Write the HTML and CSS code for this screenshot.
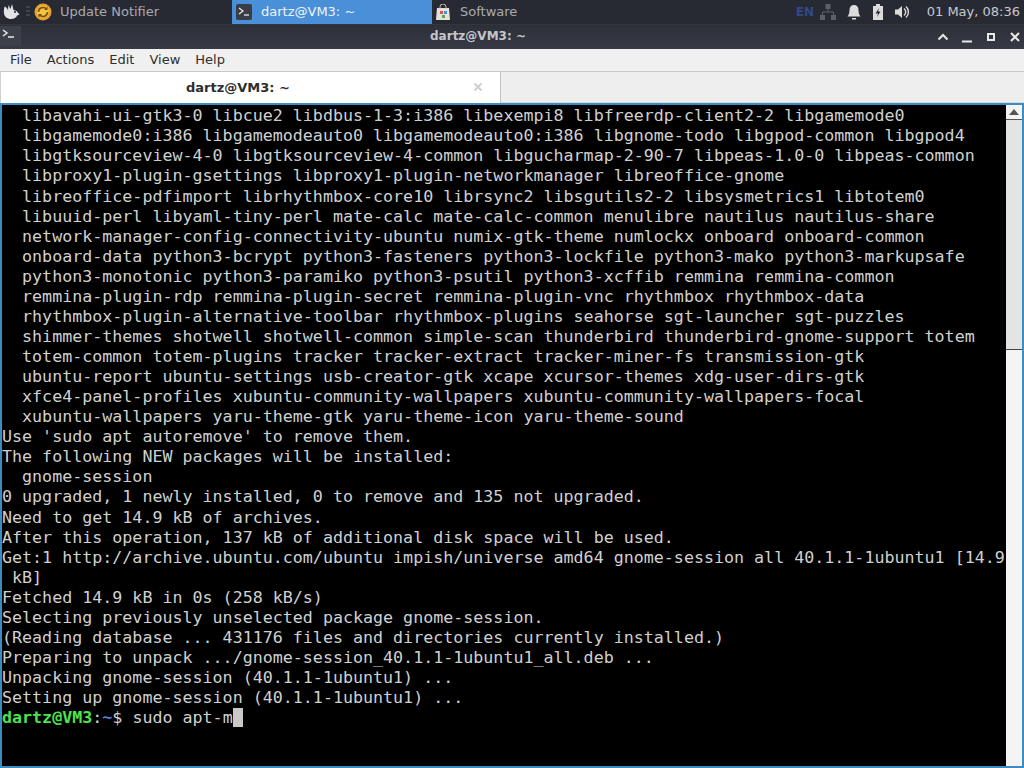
FILE: index.html
```html
<!DOCTYPE html>
<html lang="en">
<head>
<meta charset="utf-8">
<title>dartz@VM3: ~</title>
<link rel="stylesheet" href="styles.css">
</head>
<body>
<div class="panel">
  <svg class="whisker" width="24" height="24" viewBox="0 0 24 24"><path d="M4 6.500c1.500 0 3 1.500 4 3.500l.5-5 2 4 1.500-5 1.500 6 3 1 3 3.500-2.500 1c-.5 2-3 3.500-6 3.500-4 0-6.500-2.500-7-5.500-.3-2 0-5 .500-7z" fill="#e4e4e8"/><circle cx="15" cy="12" r="1" fill="#282a33"/></svg>
  <svg class="handle" width="6" height="24" viewBox="0 0 6 24"><path d="M1 7h4M1 11h4M1 15h4" stroke="#5c5e66" stroke-width="1"/></svg>
  <div class="task task-update">
    <svg width="18" height="18" viewBox="0 0 18 18"><circle cx="9" cy="9" r="8.500" fill="#e9a32c"/><circle cx="9" cy="9" r="6" fill="#f4c542"/><path d="M4.500 9a4.500 4.500 0 0 1 8-2.800M13.500 9a4.500 4.500 0 0 1-8 2.800" fill="none" stroke="#7a4a10" stroke-width="1.600"/><path d="M13.500 3.500v3.500h-3.500zM4.500 14.500v-3.500h3.500z" fill="#7a4a10"/></svg>
    <span>Update Notifier</span>
  </div>
  <div class="task task-active">
    <svg width="16" height="16" viewBox="0 0 16 16"><rect width="16" height="16" rx="2" fill="#3a3d45"/><path d="M3 4l4 3-4 3" fill="none" stroke="#e8e8e8" stroke-width="1.300"/><path d="M8 11h5" stroke="#e8e8e8" stroke-width="1.300"/></svg>
    <span>dartz@VM3: ~</span>
  </div>
  <div class="task task-software">
    <svg width="14" height="16" viewBox="0 0 14 16"><path d="M1 4h12l1 12H0z" fill="#e6e2da"/><path d="M4 5V3a3 3 0 0 1 6 0v2" fill="none" stroke="#c9b9a0" stroke-width="1"/><rect x="4" y="7" width="3" height="3" fill="#d9534f"/><rect x="8" y="7" width="3" height="3" fill="#4a90d9"/><rect x="6" y="11" width="3" height="3" fill="#5aa65a"/></svg>
    <span>Software</span>
  </div>
  <div class="tray">
    <span class="lang">EN</span>
    <svg width="16" height="16" viewBox="0 0 16 16" fill="#5e6068"><rect x="5.500" y="0" width="5" height="5"/><rect x="0" y="11" width="5" height="5"/><rect x="11" y="11" width="5" height="5"/><path d="M8 5v3M2.500 11V8h11v3" fill="none" stroke="#5e6068"/></svg>
    <svg width="16" height="16" viewBox="0 0 16 16" fill="#dcdcdc"><path d="M8 1c3 0 4.500 2 4.500 5 0 3 .7 5 2 6.500h-13c1.300-1.500 2-3.500 2-6.500 0-3 1.500-5 4.500-5z"/><rect x="6" y="14" width="4" height="1.500"/></svg>
    <svg width="12" height="16" viewBox="0 0 12 16"><path d="M4 0h4v2h3v14H1V2h3z" fill="#dcdcdc"/><path d="M7 4L3.500 9.500H6L5 13l3.500-5.500H6z" fill="#282a33"/></svg>
    <svg width="16" height="16" viewBox="0 0 16 16" fill="#dcdcdc"><path d="M1 5.500h3L8 2v12l-4-3.500H1z"/><path d="M10 4.500a4.500 4.500 0 0 1 0 7M12 2.500a7.500 7.500 0 0 1 0 11" fill="none" stroke="#dcdcdc" stroke-width="1.400"/></svg>
    <span class="clock">01 May, 08:36</span>
  </div>
</div>

<div class="titlebar">
  <div class="win-icon"><svg width="20" height="20" viewBox="0 0 20 20"><path d="M3 4l4 3-4 3" fill="none" stroke="#e8e8e8" stroke-width="1.500"/><path d="M8 11h6" stroke="#e8e8e8" stroke-width="1.500"/></svg></div>
  <div class="win-title">dartz@VM3: ~</div>
  <div class="win-buttons">
    <svg width="12" height="12" viewBox="0 0 12 12"><path d="M1.500 8.500L6 4l4.500 4.500" fill="none" stroke="#e8e8e8" stroke-width="2"/></svg>
    <svg width="12" height="12" viewBox="0 0 12 12"><path d="M1 10.500h10" stroke="#e8e8e8" stroke-width="2"/></svg>
    <svg width="12" height="12" viewBox="0 0 12 12"><rect x="3" y="3" width="6" height="6" fill="none" stroke="#e8e8e8" stroke-width="2"/></svg>
    <svg width="12" height="12" viewBox="0 0 12 12"><path d="M2 2l8 8M10 2l-8 8" stroke="#e8e8e8" stroke-width="2"/></svg>
  </div>
</div>

<nav class="menubar">
  <span>File</span><span>Actions</span><span>Edit</span><span>View</span><span>Help</span>
</nav>

<div class="tabbar">
  <div class="tab">
    <span class="tab-label">dartz@VM3: ~</span>
    <svg class="tab-close" width="10" height="10" viewBox="0 0 10 10"><path d="M1.500 1.500l7 7M8.500 1.500l-7 7" stroke="#cfcfcf" stroke-width="2"/></svg>
  </div>
</div>

<div class="term-frame">
<pre class="term">  libavahi-ui-gtk3-0 libcue2 libdbus-1-3:i386 libexempi8 libfreerdp-client2-2 libgamemode0
  libgamemode0:i386 libgamemodeauto0 libgamemodeauto0:i386 libgnome-todo libgpod-common libgpod4
  libgtksourceview-4-0 libgtksourceview-4-common libgucharmap-2-90-7 libpeas-1.0-0 libpeas-common
  libproxy1-plugin-gsettings libproxy1-plugin-networkmanager libreoffice-gnome
  libreoffice-pdfimport librhythmbox-core10 librsync2 libsgutils2-2 libsysmetrics1 libtotem0
  libuuid-perl libyaml-tiny-perl mate-calc mate-calc-common menulibre nautilus nautilus-share
  network-manager-config-connectivity-ubuntu numix-gtk-theme numlockx onboard onboard-common
  onboard-data python3-bcrypt python3-fasteners python3-lockfile python3-mako python3-markupsafe
  python3-monotonic python3-paramiko python3-psutil python3-xcffib remmina remmina-common
  remmina-plugin-rdp remmina-plugin-secret remmina-plugin-vnc rhythmbox rhythmbox-data
  rhythmbox-plugin-alternative-toolbar rhythmbox-plugins seahorse sgt-launcher sgt-puzzles
  shimmer-themes shotwell shotwell-common simple-scan thunderbird thunderbird-gnome-support totem
  totem-common totem-plugins tracker tracker-extract tracker-miner-fs transmission-gtk
  ubuntu-report ubuntu-settings usb-creator-gtk xcape xcursor-themes xdg-user-dirs-gtk
  xfce4-panel-profiles xubuntu-community-wallpapers xubuntu-community-wallpapers-focal
  xubuntu-wallpapers yaru-theme-gtk yaru-theme-icon yaru-theme-sound
Use 'sudo apt autoremove' to remove them.
The following NEW packages will be installed:
  gnome-session
0 upgraded, 1 newly installed, 0 to remove and 135 not upgraded.
Need to get 14.9 kB of archives.
After this operation, 137 kB of additional disk space will be used.
Get:1 http://archive.ubuntu.com/ubuntu impish/universe amd64 gnome-session all 40.1.1-1ubuntu1 [14.9
 kB]
Fetched 14.9 kB in 0s (258 kB/s)
Selecting previously unselected package gnome-session.
(Reading database ... 431176 files and directories currently installed.)
Preparing to unpack .../gnome-session_40.1.1-1ubuntu1_all.deb ...
Unpacking gnome-session (40.1.1-1ubuntu1) ...
Setting up gnome-session (40.1.1-1ubuntu1) ...
<span class="prompt-user">dartz@VM3</span>:<span class="prompt-path">~</span>$ sudo apt-m<span class="cursor"> </span></pre>
  <div class="scrollbar">
    <div class="sb-arrow"><svg width="10" height="6" viewBox="0 0 10 6"><path d="M5 0l5 6H0z" fill="#555"/></svg></div>
    <div class="sb-thumb"></div>
  </div>
</div>
</body>
</html>
```

FILE: styles.css
```css
* { box-sizing: border-box; }
html, body { margin: 0; height: 100%; }
body {
  width: 1024px;
  height: 768px;
  overflow: hidden;
  display: flex;
  flex-direction: column;
  font-family: "DejaVu Sans", sans-serif;
  background: #f0f0f0;
}
svg { display: block; flex: none; }

.panel {
  height: 24px;
  background: #282a33;
  display: flex;
  align-items: center;
  font-size: 13px;
  color: #a8aab0;
  flex: none;
}
.handle { margin-left: 1px; }
.task { height: 24px; display: flex; align-items: center; }
.task span { padding-bottom: 2px; }
.task-update { width: 201px; padding-left: 3px; gap: 8px; }
.task-active { width: 200px; background: #4a90d9; color: #f0f4f8; padding-left: 4px; gap: 9px; }
.task-software { padding-left: 4px; gap: 10px; }
.tray { margin-left: auto; display: flex; align-items: center; gap: 10px; padding-right: 4px; }
.lang { color: #2f4a86; font-weight: 700; font-size: 12px; width: 18px; margin-right: -4px; }
.clock { margin-left: 7px; color: #c8c9cd; white-space: nowrap; padding-bottom: 2px; }

.titlebar {
  height: 25px;
  flex: none;
  background: linear-gradient(#2d3039, #373a44);
  display: flex;
  align-items: center;
  position: relative;
  border-top: 1px solid #34363f;
}
.win-icon { width: 21px; height: 20px; background: #3d4049; margin-top: -2px; }
.win-title {
  position: absolute;
  left: 0;
  right: 68px;
  top: 4px;
  line-height: 15px;
  text-align: center;
  font-size: 12px;
  font-weight: 700;
  color: #c4c6ca;
}
.win-buttons { margin-left: auto; margin-top: -1px; display: flex; gap: 12px; padding-right: 3px; position: relative; }

.menubar {
  height: 22px;
  flex: none;
  background: #f0f0f0;
  display: flex;
  align-items: center;
  gap: 15px;
  padding-left: 10px;
  padding-bottom: 2px;
  font-size: 13px;
  color: #2e2e2e;
}

.tabbar {
  height: 32px;
  flex: none;
  background: #eeeeee;
  border-top: 1px solid #c8c8c8;
  border-bottom: 1px solid #d8d8d8;
}
.tab {
  width: 501px;
  height: 32px;
  background: #ffffff;
  border-right: 1px solid #c0c0c0;
  border-left: 1px solid #d0d0d0;
  display: flex;
  align-items: center;
  padding-bottom: 2px;
  font-size: 13px;
  font-weight: 700;
  color: #2e2e2e;
}
.tab-label { flex: 1; text-align: center; padding-left: 2px; }
.tab-close { margin-right: 17px; }

.term-frame {
  flex: 1;
  min-height: 0;
  display: flex;
  background: #000;
  border: 2px solid #3c8cc0;
}
.term {
  flex: 1;
  min-width: 0;
  margin: 0;
  padding: 1.290px 0 0;
  overflow: hidden;
  color: #d0d0d0;
  background: #000;
  font-family: "DejaVu Sans Mono", monospace;
  font-size: 16.670px;
  line-height: 20.067px;
}
.prompt-user { color: #4ce34c; font-weight: 700; }
.prompt-path { color: #5a7fd0; font-weight: 700; }
.cursor { background: #c8c8c8; }

.scrollbar { width: 16px; flex: none; background: #f4f4f4; display: flex; flex-direction: column; }
.sb-arrow {
  height: 15px;
  flex: none;
  background: #f4f4f4;
  border-bottom: 1px solid #555;
  display: flex;
  align-items: center;
  justify-content: center;
}
.sb-thumb { height: 230px; flex: none; background: #e4e4e4; border-bottom: 1px solid #444; }
```
